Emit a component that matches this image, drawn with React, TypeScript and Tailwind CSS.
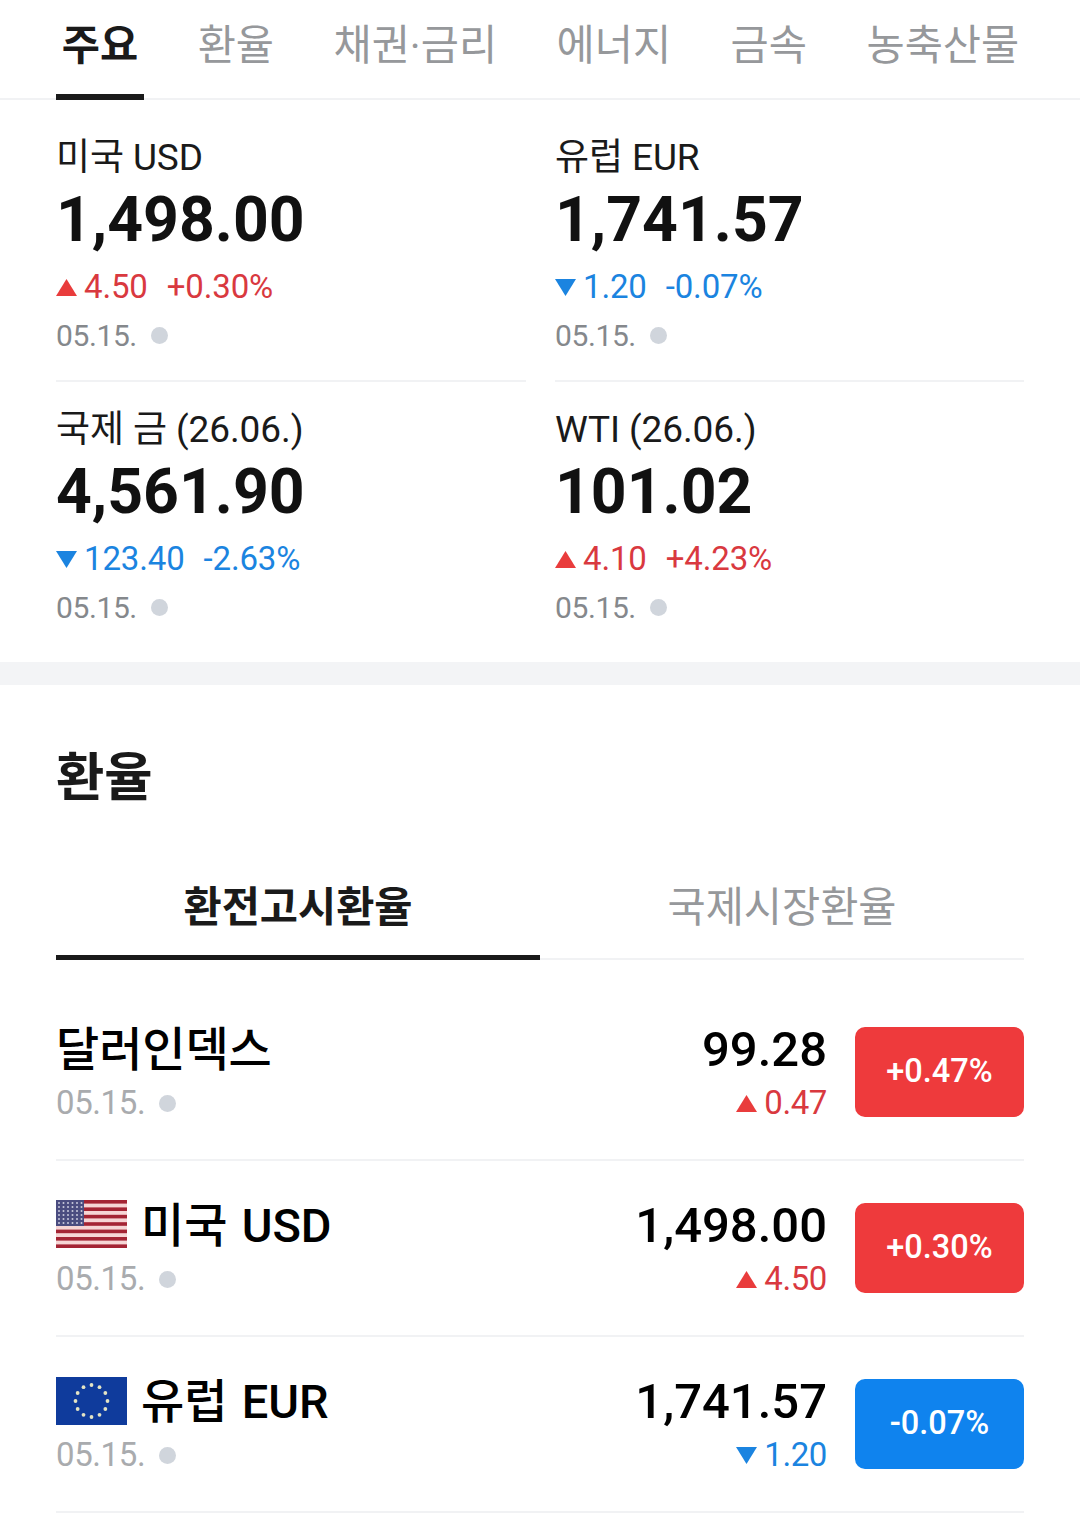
const font = "font-['Roboto','Noto_Sans_CJK_KR',sans-serif]";

const tabs = ["주요", "환율", "채권·금리", "에너지", "금속", "농축산물"];

type Card = { name: string; value: string; up: boolean; diff: string; rate: string };

const cards: Card[] = [
  { name: "미국 USD", value: "1,498.00", up: true, diff: "4.50", rate: "+0.30%" },
  { name: "유럽 EUR", value: "1,741.57", up: false, diff: "1.20", rate: "-0.07%" },
  { name: "국제 금 (26.06.)", value: "4,561.90", up: false, diff: "123.40", rate: "-2.63%" },
  { name: "WTI (26.06.)", value: "101.02", up: true, diff: "4.10", rate: "+4.23%" },
];

type Row = { name: string; flag?: "us" | "eu"; value: string; up: boolean; diff: string; rate: string };

const rows: Row[] = [
  { name: "달러인덱스", value: "99.28", up: true, diff: "0.47", rate: "+0.47%" },
  { name: "미국 USD", flag: "us", value: "1,498.00", up: true, diff: "4.50", rate: "+0.30%" },
  { name: "유럽 EUR", flag: "eu", value: "1,741.57", up: false, diff: "1.20", rate: "-0.07%" },
];

const Arrow = ({ up, className }: { up: boolean; className: string }) => (
  <svg viewBox="0 0 21 17" className={className}>
    {up ? <path d="M10.5 0 21 17H0z" fill="#e93c3c" /> : <path d="M0 0h21L10.5 17z" fill="#1b84e0" />}
  </svg>
);

const Dot = () => <span className="h-[17px] w-[17px] rounded-full bg-[#d0d5dc]" />;

const UsFlag = () => (
  <svg viewBox="0 0 71 48" className="mb-[4px] h-[48px] w-[71px] shrink-0">
    <rect width="71" height="48" fill="#f6d5d5" />
    {[0, 7.4, 14.8, 22.2, 29.6, 37, 44.4].map((y) => (
      <rect key={y} y={y} width="71" height="3.6" fill="#a42434" />
    ))}
    <rect width="28" height="26" fill="#4a4c80" />
    {[3, 7, 11, 15, 19, 23].map((y) =>
      [3, 7.5, 12, 16.5, 21, 25.5].map((x) => <circle key={`${x}-${y}`} cx={x} cy={y} r="1" fill="#c9c9dc" />),
    )}
  </svg>
);

const EuFlag = () => (
  <svg viewBox="0 0 71 48" className="mb-[2px] h-[48px] w-[71px] shrink-0">
    <rect width="71" height="48" fill="#0f3b9c" />
    {Array.from({ length: 12 }).map((_, i) => {
      const a = (i * Math.PI) / 6;
      return <circle key={i} cx={35.5 + Math.sin(a) * 16} cy={24 - Math.cos(a) * 16} r="1.9" fill="#e4e4c4" />;
    })}
  </svg>
);

const MarketCard = ({ card, top }: { card: Card; top: boolean }) => {
  const color = card.up ? "text-[#d9393f]" : "text-[#1b84e0]";
  return (
    <div className={top ? "h-[282px] border-b-2 border-[#f1f2f4] pt-[32px]" : "h-[280px] pt-[22px]"}>
      <div className="h-[52px] text-[37px] leading-[52px] tracking-[-0.1px] text-[#1a1a1a]">{card.name}</div>
      <div className="h-[72px] text-[62.5px] font-bold leading-[72px] text-[#111]">{card.value}</div>
      <div className={`mt-[11px] flex h-[40px] items-center text-[33px] tracking-[-0.15px] ${color}`}>
        <Arrow up={card.up} className="mr-[7px] h-[17px] w-[21px]" />
        <span>{card.diff}</span>
        <span className="ml-[19px]">{card.rate}</span>
      </div>
      <div className="mt-[8px] flex h-[40px] items-center gap-[14px] text-[30px] tracking-[-0.4px] text-[#85888c]">
        <span>05.15.</span>
        <Dot />
      </div>
    </div>
  );
};

const ListRow = ({ row }: { row: Row }) => (
  <div className="flex h-[176px] items-start justify-between border-b-2 border-[#f1f2f4] pt-[32px]">
    <div>
      <div className="flex h-[66px] items-center gap-[14px] text-[47px] font-medium tracking-[-0.1px] text-black [word-spacing:3px]">
        {row.flag === "us" && <UsFlag />}
        {row.flag === "eu" && <EuFlag />}
        <span>{row.name}</span>
      </div>
      <div className="flex h-[40px] items-center gap-[14px] text-[33px] tracking-[-0.4px] text-[#a9abae]">
        <span>05.15.</span>
        <Dot />
      </div>
    </div>
    <div className="flex items-start">
      <div className="flex flex-col items-end">
        <div className="h-[66px] text-[49px] font-medium leading-[66px] text-black">{row.value}</div>
        <div className={`flex h-[40px] items-center text-[33px] tracking-[-0.4px] ${row.up ? "text-[#d9393f]" : "text-[#1b84e0]"}`}>
          <Arrow up={row.up} className="mr-[7px] h-[17px] w-[21px]" />
          <span>{row.diff}</span>
        </div>
      </div>
      <div
        className={`ml-[28px] mt-[10px] flex h-[90px] w-[169px] items-center justify-center rounded-[10px] pb-[2px] text-[32.5px] font-medium text-white ${
          row.up ? "bg-[#ee3a3c]" : "bg-[#0f83ee]"
        }`}
      >
        {row.rate}
      </div>
    </div>
  </div>
);

export default function App() {
  return (
    <div className={`h-[1513px] w-[1080px] overflow-hidden bg-white ${font}`}>
      <div className="flex h-[100px] gap-[48px] border-b-2 border-[#f1f2f4] pl-[56px]">
        {tabs.map((tab, i) => (
          <div
            key={tab}
            className={`-mb-[2px] h-[100px] px-[5.75px] pt-[16px] text-[41.5px] leading-[60px] ${
              i === 0 ? "border-b-[6px] border-[#1a1a1a] font-bold text-[#1a1a1a]" : "text-[#96989b]"
            }`}
          >
            {tab}
          </div>
        ))}
      </div>

      <div className="grid h-[562px] grid-cols-[470px_469px] content-start gap-x-[29px] pl-[56px]">
        {cards.map((card, i) => (
          <MarketCard key={card.name} card={card} top={i < 2} />
        ))}
      </div>

      <div className="h-[23px] bg-[#f3f4f6]" />

      <div className="px-[56px]">
        <h2 className="mt-[58px] h-[70px] text-[52.5px] font-bold leading-[70px] text-[#1a1a1a]">환율</h2>
        <div className="mt-[48px] flex h-[99px] border-b-2 border-[#f1f2f4]">
          <div className="-mb-[2px] h-[99px] w-[484px] border-b-[5px] border-[#1a1a1a] pt-[17px] text-center text-[41.5px] font-bold leading-[60px] text-[#1a1a1a]">
            환전고시환율
          </div>
          <div className="w-[484px] pt-[17px] text-center text-[41.5px] leading-[60px] text-[#96989b]">국제시장환율</div>
        </div>
        <div className="mt-[25px]">
          {rows.map((row) => (
            <ListRow key={row.name} row={row} />
          ))}
        </div>
      </div>
    </div>
  );
}
